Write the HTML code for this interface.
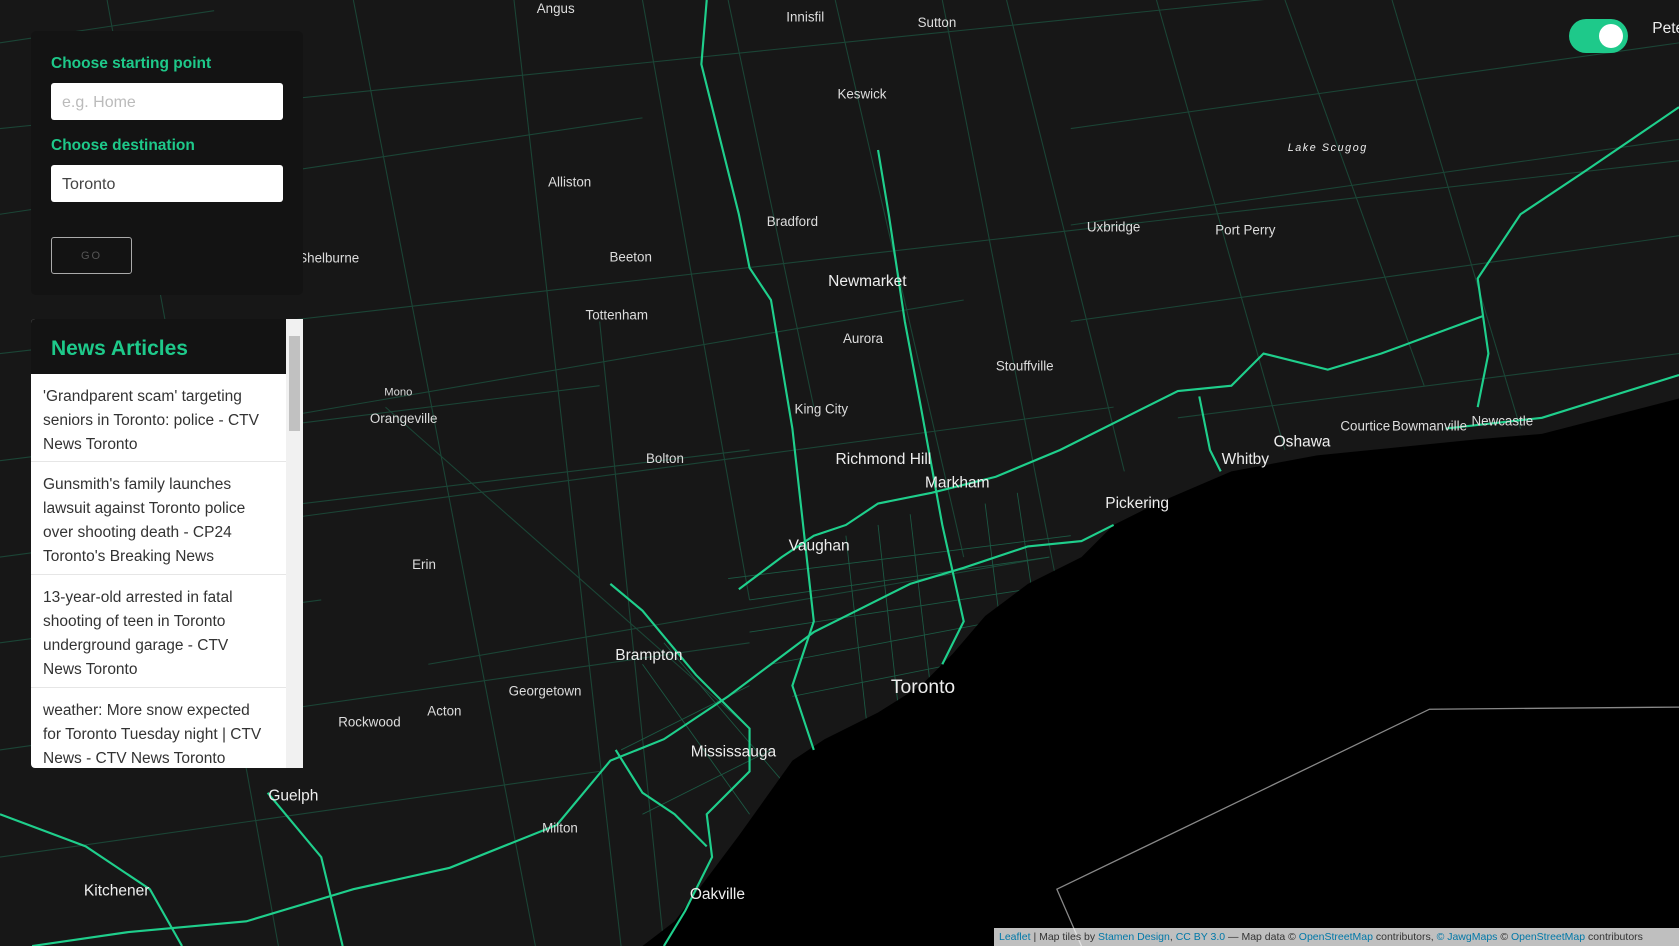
<!DOCTYPE html>
<html><head><meta charset="utf-8"><style>
*{margin:0;padding:0;box-sizing:border-box}
body{width:1679px;height:946px;overflow:hidden;background:#171717;font-family:"Liberation Sans",sans-serif;position:relative}
svg.map{position:absolute;left:0;top:0}
.panel{position:absolute;left:31px;top:31px;width:272px;height:264px;background:#131313;border-radius:5px}
.lbl{position:absolute;left:20px;color:#1ec98a;font-weight:bold;font-size:15.5px}
.inp{position:absolute;left:20px;width:232px;height:37px;background:#fff;border-radius:3px;font-size:16px;padding:11px 11px;color:#444}
.go{position:absolute;left:20px;top:206px;width:81px;height:37px;border:1px solid #aaa;border-radius:3px;color:#555;font-size:11px;letter-spacing:2px;text-align:center;line-height:37px}
.news{position:absolute;left:31px;top:319px;width:272px;height:449px;background:#fff;overflow:hidden;border-radius:4px 0 0 4px}
.nh{height:55px;background:#131313;width:255px;color:#1ec98a;font-weight:bold;font-size:21px;padding:18px 20px}
.it{width:255px;border-bottom:1px solid #e6e6e6;padding:11px 18px 10px 12px;font-size:15.5px;line-height:24px;color:#333}
.sb{position:absolute;right:0;top:0;width:17px;height:449px;background:#f1f1f1}
.th{position:absolute;left:3px;top:17px;width:11px;height:95px;background:#c1c1c1}
.attr{position:absolute;right:0;bottom:0;height:18px;width:685px;background:rgba(255,255,255,.75);font-size:10.5px;color:#333;padding:3px 5px;white-space:nowrap}
.attr b{color:#0078a8;font-weight:normal}
.tog{position:absolute;left:1569px;top:19px;width:59px;height:34px;background:#1ec98a;border-radius:17px}
.tog i{position:absolute;right:5px;top:5px;width:24px;height:24px;background:#fff;border-radius:50%}
</style></head><body>
<svg class="map" width="1679" height="946" viewBox="0 0 1568 883" preserveAspectRatio="none" font-family="Liberation Sans, sans-serif">
<rect width="1568" height="883" fill="#171717"/>
<g stroke="#1b4536" stroke-width="1" fill="none">
<path d="M0 120 L1568 -40"/><path d="M0 330 L1568 150"/><path d="M0 520 L1040 380"/><path d="M0 700 L700 600"/>
<path d="M100 0 L260 883"/><path d="M330 0 L500 883"/><path d="M600 0 L700 560"/><path d="M880 0 L990 560"/><path d="M1080 0 L1200 420"/><path d="M1300 0 L1420 400"/>
<path d="M0 200 L600 110"/><path d="M200 400 L900 280"/><path d="M400 620 L980 520"/><path d="M1000 120 L1568 40"/><path d="M1000 300 L1568 220"/>
<path d="M780 0 L900 520"/><path d="M480 0 L580 883"/><path d="M0 800 L560 720"/><path d="M1200 0 L1330 360"/>
<path d="M360 380 L700 680"/><path d="M0 600 L300 560"/>
<path d="M0 40 L200 10"/><path d="M1000 210 L1568 130"/><path d="M1100 390 L1568 330"/><path d="M940 0 L1050 440"/><path d="M680 0 L760 380"/>
<path d="M200 480 L700 420"/><path d="M560 300 L620 883"/><path d="M0 430 L560 360"/>
</g>
<g stroke="#1c5a44" stroke-width="0.8" fill="none">
<path d="M700 560 L980 520"/><path d="M700 590 L960 550"/><path d="M720 620 L930 580"/><path d="M740 650 L890 620"/><path d="M680 540 L1000 500"/>
<path d="M790 500 L810 680"/><path d="M820 490 L840 670"/><path d="M850 480 L870 650"/><path d="M920 470 L935 590"/><path d="M950 460 L965 560"/>
<path d="M600 620 L700 760"/><path d="M620 600 L740 740"/><path d="M580 700 L700 640"/><path d="M600 760 L720 700"/>
</g>
<path d="M1568 372 L1440 405 L1380 410 L1300 418 L1230 425 L1150 440 L1080 470 L1040 490 L1010 520 L960 545 L920 575 L890 610 L860 640 L820 665 L770 690 L740 710 L715 745 L690 780 L660 820 L630 860 L600 883 L1568 883 Z" fill="#000"/>
<path d="M1568 660 L1335 662 L987 830 L1010 883" stroke="#888" stroke-width="1.2" fill="none"/>
<g stroke="#1fcf8c" stroke-width="2" fill="none">
<path d="M660 0 L655 60 L690 200 L700 250 L720 280 L740 400 L760 580 L740 640 L760 700"/>
<path d="M820 140 L830 200 L845 300 L860 380 L880 490 L900 580 L880 620"/>
<path d="M1568 100 L1480 160 L1420 200 L1380 260 L1390 330 L1380 380"/>
<path d="M1385 295 L1290 330 L1240 345 L1180 330 L1150 360 L1100 365 L1050 390 L990 420 L930 445 L870 460 L820 470 L790 490 L760 500 L730 520 L690 550"/>
<path d="M1040 490 L1010 505 L960 510 L900 530 L850 545 L800 570 L760 590 L720 620 L680 650 L620 690 L570 710 L520 770 L420 810 L330 830 L230 860 L120 870 L30 883"/>
<path d="M570 545 L600 570 L650 630 L700 680 L700 720 L660 760 L665 800 L640 850 L620 883"/>
<path d="M575 700 L600 740 L630 760 L660 790"/>
<path d="M1568 350 L1440 390 L1350 400"/>
<path d="M0 760 L80 790 L140 830 L170 883"/>
<path d="M250 740 L300 800 L320 883"/>
<path d="M1120 370 L1130 420 L1140 440"/>
</g>
<g fill="#ddd" font-size="12.5" text-anchor="middle">
<text x="519" y="12">Angus</text><text x="752" y="20">Innisfil</text><text x="875" y="25">Sutton</text>
<text x="805" y="92">Keswick</text><text x="532" y="174">Alliston</text><text x="740" y="211">Bradford</text>
<text x="1040" y="216">Uxbridge</text><text x="1163" y="219">Port Perry</text><text x="589" y="244">Beeton</text>
<text x="307" y="245">Shelburne</text><text x="576" y="298">Tottenham</text><text x="806" y="320">Aurora</text>
<text x="957" y="346">Stouffville</text><text x="372" y="369" font-size="10.5">Mono</text><text x="377" y="395">Orangeville</text>
<text x="767" y="386">King City</text><text x="1275" y="402">Courtice</text><text x="1335" y="402">Bowmanville</text>
<text x="1403" y="397">Newcastle</text><text x="621" y="432">Bolton</text><text x="396" y="531">Erin</text>
<text x="509" y="649">Georgetown</text><text x="415" y="668">Acton</text><text x="345" y="678">Rockwood</text>
<text x="523" y="777">Milton</text>
</g>
<g fill="#eee" font-size="14.5" text-anchor="middle">
<text x="810" y="267">Newmarket</text><text x="825" y="433">Richmond Hill</text><text x="894" y="455">Markham</text>
<text x="1163" y="433">Whitby</text><text x="1216" y="417">Oshawa</text><text x="1062" y="474">Pickering</text>
<text x="765" y="514">Vaughan</text><text x="606" y="616">Brampton</text><text x="685" y="706">Mississauga</text>
<text x="274" y="747">Guelph</text><text x="109" y="836">Kitchener</text><text x="670" y="839">Oakville</text>
<text x="862" y="647" font-size="18">Toronto</text>
<text x="1240" y="141" font-size="10" font-style="italic" letter-spacing="1.5">Lake Scugog</text>
<text x="1543" y="31" text-anchor="start">Pete</text>
</g>
</svg>
<div class="tog"><i></i></div>
<div class="panel">
<div class="lbl" style="top:24px">Choose starting point</div>
<div class="inp" style="top:52px;color:#bbb">e.g. Home</div>
<div class="lbl" style="top:106px">Choose destination</div>
<div class="inp" style="top:134px">Toronto</div>
<div class="go">GO</div>
</div>
<div class="news">
<div class="nh">News Articles</div>
<div class="it" style="height:88px">'Grandparent scam' targeting seniors in Toronto: police - CTV News Toronto</div>
<div class="it" style="height:113px">Gunsmith's family launches lawsuit against Toronto police over shooting death - CP24 Toronto's Breaking News</div>
<div class="it" style="height:113px">13-year-old arrested in fatal shooting of teen in Toronto underground garage - CTV News Toronto</div>
<div class="it" style="height:113px">weather: More snow expected for Toronto Tuesday night | CTV News - CTV News Toronto</div>
<div class="sb"><div class="th"></div></div>
</div>
<div class="attr"><b>Leaflet</b> | Map tiles by <b>Stamen Design</b>, <b>CC BY 3.0</b> — Map data © <b>OpenStreetMap</b> contributors, <b>© JawgMaps</b> © <b>OpenStreetMap</b> contributors</div>
</body></html>
